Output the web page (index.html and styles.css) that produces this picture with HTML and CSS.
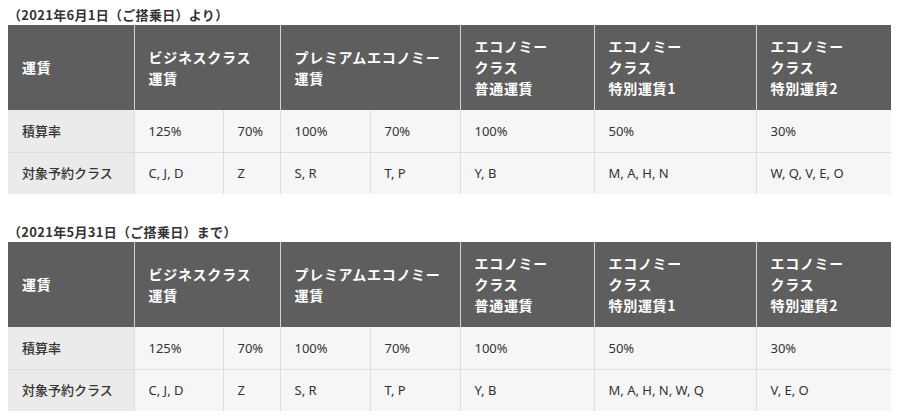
FILE: index.html
```html
<!DOCTYPE html>
<html lang="ja">
<head>
<meta charset="utf-8">
<link rel="stylesheet" href="styles.css">
</head>
<body>
<section class="block">
  <p class="caption">（2021年6月1日（ご搭乗日）より）</p>
  <table class="fare">
    <colgroup>
      <col class="c-label"><col class="c-b1"><col class="c-b2"><col class="c-p1"><col class="c-p2"><col class="c-e1"><col class="c-e2"><col class="c-e3">
    </colgroup>
    <thead>
      <tr>
        <th>運賃</th>
        <th colspan="2">ビジネスクラス<br>運賃</th>
        <th colspan="2">プレミアムエコノミー<br>運賃</th>
        <th>エコノミー<br>クラス<br>普通運賃</th>
        <th>エコノミー<br>クラス<br>特別運賃1</th>
        <th>エコノミー<br>クラス<br>特別運賃2</th>
      </tr>
    </thead>
    <tbody>
      <tr>
        <td class="label">積算率</td>
        <td>125%</td><td>70%</td><td>100%</td><td>70%</td><td>100%</td><td>50%</td><td>30%</td>
      </tr>
      <tr>
        <td class="label">対象予約クラス</td>
        <td>C, J, D</td><td>Z</td><td>S, R</td><td>T, P</td><td>Y, B</td><td>M, A, H, N</td><td>W, Q, V, E, O</td>
      </tr>
    </tbody>
  </table>
</section>
<section class="block second">
  <p class="caption">（2021年5月31日（ご搭乗日）まで）</p>
  <table class="fare">
    <colgroup>
      <col class="c-label"><col class="c-b1"><col class="c-b2"><col class="c-p1"><col class="c-p2"><col class="c-e1"><col class="c-e2"><col class="c-e3">
    </colgroup>
    <thead>
      <tr>
        <th>運賃</th>
        <th colspan="2">ビジネスクラス<br>運賃</th>
        <th colspan="2">プレミアムエコノミー<br>運賃</th>
        <th>エコノミー<br>クラス<br>普通運賃</th>
        <th>エコノミー<br>クラス<br>特別運賃1</th>
        <th>エコノミー<br>クラス<br>特別運賃2</th>
      </tr>
    </thead>
    <tbody>
      <tr>
        <td class="label">積算率</td>
        <td>125%</td><td>70%</td><td>100%</td><td>70%</td><td>100%</td><td>50%</td><td>30%</td>
      </tr>
      <tr>
        <td class="label">対象予約クラス</td>
        <td>C, J, D</td><td>Z</td><td>S, R</td><td>T, P</td><td>Y, B</td><td>M, A, H, N, W, Q</td><td>V, E, O</td>
      </tr>
    </tbody>
  </table>
</section>
</body>
</html>
```

FILE: styles.css
```css
html, body {
  background: #ffffff;
}
body {
  margin: 8px;
  font-family: "Noto Sans", "Noto Sans CJK JP", sans-serif;
  color: #333333;
}
.block.second {
  margin-top: 31px;
}
.caption {
  margin: 0 0 3px;
  font-family: "Noto Sans CJK JP", sans-serif;
  font-weight: 700;
  font-size: 13px;
  line-height: 14px;
  letter-spacing: 0.3px;
  color: #333333;
}
.fare {
  width: 883px;
  border-collapse: collapse;
  table-layout: fixed;
}
.c-label { width: 126px; }
.c-b1 { width: 89px; }
.c-b2 { width: 57px; }
.c-p1 { width: 90px; }
.c-p2 { width: 90px; }
.c-e1 { width: 134px; }
.c-e2 { width: 162px; }
.c-e3 { width: 135px; }
.fare th {
  height: 85px;
  padding: 0 14px;
  box-sizing: border-box;
  background: #5e5e5e;
  color: #ffffff;
  font-family: "Noto Sans CJK JP", sans-serif;
  font-weight: 700;
  font-size: 14px;
  line-height: 21px;
  letter-spacing: 0.7px;
  text-align: left;
  vertical-align: middle;
  border-left: 1px solid #d2d2d2;
}
.fare th:first-child {
  border-left: none;
}
.fare td {
  height: 42px;
  padding: 0 14px;
  box-sizing: border-box;
  background: #f6f6f6;
  font-size: 13px;
  line-height: 18px;
  color: #333333;
  vertical-align: middle;
  border-left: 1px solid #dedede;
  border-top: 1px solid #dedede;
  white-space: nowrap;
}
.fare tbody tr:first-child td {
  border-top: none;
}
.fare td.label {
  background: #ebebeb;
  border-left: none;
  font-family: "Noto Sans CJK JP", sans-serif;
  font-weight: 500;
}
```
